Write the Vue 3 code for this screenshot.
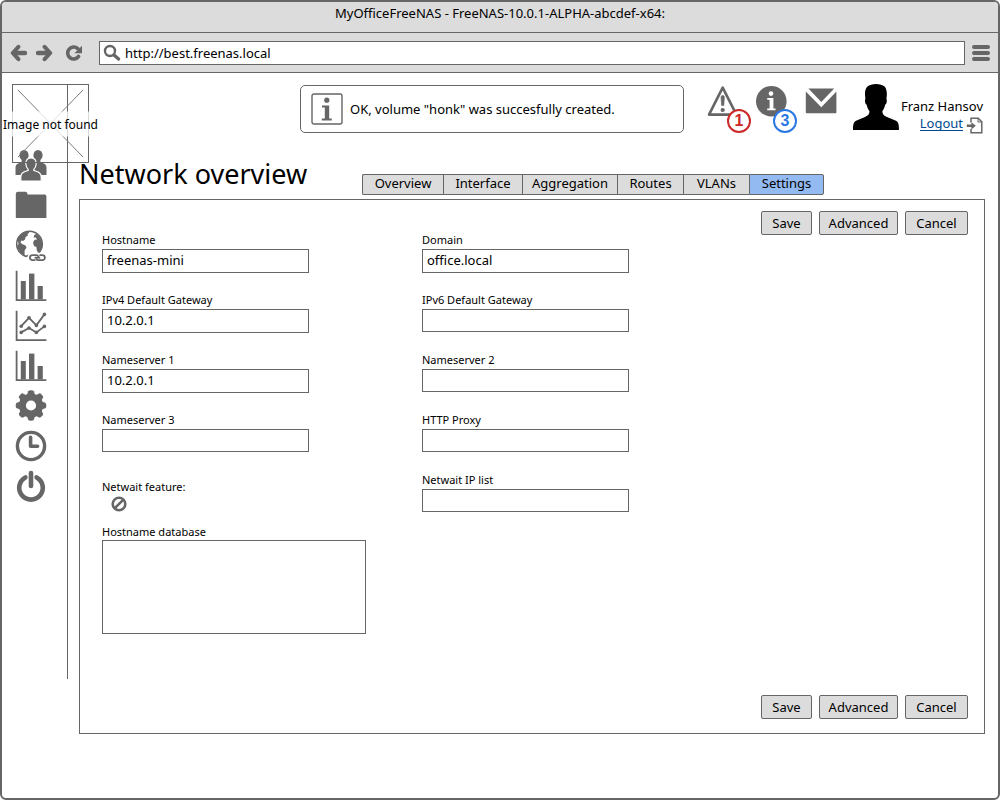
<script setup>
import { ref } from 'vue'

const url = ref('http://best.freenas.local')
const tabs = ['Overview', 'Interface', 'Aggregation', 'Routes', 'VLANs', 'Settings']
const activeTab = ref('Settings')
const actions = ['Save', 'Advanced', 'Cancel']
const database = ref('')

const leftFields = ref([
  { id: 'hostname', label: 'Hostname', value: 'freenas-mini' },
  { id: 'gw4', label: 'IPv4 Default Gateway', value: '10.2.0.1' },
  { id: 'ns1', label: 'Nameserver 1', value: '10.2.0.1' },
  { id: 'ns3', label: 'Nameserver 3', value: '' },
])
const rightFields = ref([
  { id: 'domain', label: 'Domain', value: 'office.local' },
  { id: 'gw6', label: 'IPv6 Default Gateway', value: '' },
  { id: 'ns2', label: 'Nameserver 2', value: '' },
  { id: 'proxy', label: 'HTTP Proxy', value: '' },
  { id: 'iplist', label: 'Netwait IP list', value: '' },
])
const sections = ['users', 'storage', 'network', 'reports', 'trends', 'statistics', 'settings', 'schedule', 'power']
</script>

<template>
  <div class="window">
    <div class="titlebar">MyOfficeFreeNAS - FreeNAS-10.0.1-ALPHA-abcdef-x64:</div>

    <div class="toolbar">
      <button class="tool" aria-label="Back">
        <svg width="18" height="18" viewBox="0 0 18 18">
          <path d="M8.4 2.8 L2.8 9 L8.4 15.2" fill="none" stroke="#666" stroke-width="4" stroke-linecap="round" stroke-linejoin="round" />
          <path d="M4 9 H15" stroke="#666" stroke-width="4.4" stroke-linecap="round" />
        </svg>
      </button>
      <button class="tool" aria-label="Forward">
        <svg width="18" height="18" viewBox="0 0 18 18">
          <path d="M9.6 2.8 L15.2 9 L9.6 15.2" fill="none" stroke="#666" stroke-width="4" stroke-linecap="round" stroke-linejoin="round" />
          <path d="M3 9 H14" stroke="#666" stroke-width="4.4" stroke-linecap="round" />
        </svg>
      </button>
      <button class="tool reload" aria-label="Reload">
        <svg width="18" height="18" viewBox="0 0 18 18">
          <path d="M13.6 12.4 A6 6 0 1 1 12.8 4.6" fill="none" stroke="#666" stroke-width="3.6" stroke-linecap="round" />
          <path d="M17 1.8 V9.2 H9.4 Z" fill="#666" />
        </svg>
      </button>
      <div class="address">
        <svg width="18" height="18" viewBox="0 0 18 18">
          <circle cx="7" cy="7" r="5" fill="none" stroke="#666" stroke-width="2.4" />
          <path d="M11 11 L15.6 15" stroke="#666" stroke-width="3.4" stroke-linecap="round" />
        </svg>
        <input v-model="url" type="text" aria-label="Address" />
      </div>
      <button class="tool" aria-label="Menu">
        <svg width="18" height="18" viewBox="0 0 18 18">
          <path d="M2 3 H16 M2 9 H16 M2 15 H16" stroke="#666" stroke-width="4" stroke-linecap="round" />
        </svg>
      </button>
    </div>

    <div class="content">
      <nav class="sidebar">
        <button v-for="name in sections" :key="name" class="nav" :aria-label="name">
          <svg width="32" height="32" viewBox="0 0 32 32" fill="#666">
            <g v-if="name === 'users'">
              <ellipse cx="9" cy="5.2" rx="4.6" ry="5.2" />
              <ellipse cx="23" cy="5.2" rx="4.6" ry="5.2" />
              <path d="M6.6 8 H11.4 V12 L17 14 V25 H0.5 V18 C0.5 14 3 13.6 6.6 12 Z" />
              <path d="M20.6 8 H25.4 V12 C29 13.6 31.5 14 31.5 18 V25 H15 V14 L20.6 12 Z" />
              <path d="M16 8 C12.3 8 10.6 10.6 10.8 14 C11 16.5 12 18 13.2 19.4 V20.4 C9 22 5.8 22.4 5.8 27 V31 H26.2 V27 C26.2 22.4 23 22 18.8 20.4 V19.4 C20 18 21 16.5 21.2 14 C21.4 10.6 19.7 8 16 8 Z" stroke="#fff" stroke-width="1.2" />
            </g>
            <path v-else-if="name === 'storage'" d="M0.8 4 Q0.8 1.8 3 1.8 H10.5 Q12.6 1.8 12.6 4.4 H29.8 Q31.4 4.4 31.4 6.2 V28 H0.8 Z" />
            <g v-else-if="name === 'network'">
              <circle cx="14.5" cy="14" r="12.8" fill="#fff" stroke="#666" stroke-width="1.6" />
              <path d="M2.5 10 C4 5 8 2.2 13 1.4 L14.4 2.6 L12.4 4.2 L13 5.4 L10.6 7 L10 9.4 L8 11 L6.4 10.6 L5.4 12.6 L7.4 14.2 L10.2 15.2 L11.6 17.4 L9.6 20.6 L9.6 25.4 C6 23.6 3 20 2.2 16 L3.6 14 Z" />
              <path d="M19.4 4.8 L21.4 4 C24.4 6.2 27 10 27.2 14 C27 18 25.6 20.8 23.4 22.8 L21.8 20.6 L21.4 17 L19 16 L18 12.6 L19.6 9.8 L22 9.4 L20.8 7.6 L18.6 7.6 Z" />
              <path d="M11 25.2 L15 24 L17 26.6 L12.4 27 Z" />
              <g fill="none" stroke="#fff" stroke-width="5">
                <rect x="14.7" y="25.2" width="9.4" height="5" rx="2.5" />
                <rect x="20.5" y="25.2" width="9.4" height="5" rx="2.5" />
              </g>
              <g fill="none" stroke="#666" stroke-width="1.8">
                <path d="M20.4 30.2 H17.4 A2.5 2.5 0 0 1 17.4 25.2 H21.4 A2.5 2.5 0 0 1 23.6 27" />
                <path d="M24.4 25.2 H27.4 A2.5 2.5 0 0 1 27.4 30.2 H23.2 A2.5 2.5 0 0 1 21 28.4" />
                <path d="M19.6 27.7 H25.2" />
              </g>
            </g>
            <g v-else-if="name === 'reports' || name === 'statistics'">
              <path d="M1.6 0.8 V30.2 H31.4" fill="none" stroke="#666" stroke-width="1.8" />
              <rect x="5.8" y="11" width="5" height="18.4" />
              <rect x="14" y="3.6" width="5.4" height="25.8" />
              <rect x="22.6" y="16" width="5.2" height="13.4" />
            </g>
            <g v-else-if="name === 'trends'">
              <path d="M1.6 0.8 V30.2 H31.4" fill="none" stroke="#666" stroke-width="1.8" />
              <path d="M6.2 16.2 L14 7.8 L21.4 15.4 L29.4 4.4 M6.2 22.4 L14 18 L21.4 22.4 L29.4 16.4" fill="none" stroke="#666" stroke-width="1.8" />
              <circle cx="6.2" cy="16.2" r="1.8" /><circle cx="14" cy="7.8" r="1.8" />
              <circle cx="21.4" cy="15.4" r="1.8" /><circle cx="29.4" cy="4.4" r="1.8" />
              <circle cx="6.2" cy="22.4" r="1.8" /><circle cx="14" cy="18" r="1.8" />
              <circle cx="21.4" cy="22.4" r="1.8" /><circle cx="29.4" cy="16.4" r="1.8" />
            </g>
            <g v-else-if="name === 'settings'">
              <circle cx="16" cy="15.5" r="8.6" fill="none" stroke="#666" stroke-width="7" />
              <path
                v-for="n in 8"
                :key="n"
                d="M12 5 L13.2 1.2 Q13.6 0.2 16 0.2 Q18.4 0.2 18.8 1.2 L20 5 Z"
                :transform="`rotate(${n * 45} 16 15.5)`"
              />
            </g>
            <g v-else-if="name === 'schedule'" fill="none" stroke="#666">
              <circle cx="16" cy="16" r="13.6" stroke-width="3.4" />
              <path d="M15.6 7.4 V16.2 H22.6" stroke-width="3.6" stroke-linecap="round" stroke-linejoin="round" />
            </g>
            <g v-else fill="none" stroke="#666" stroke-width="4.6" stroke-linecap="round">
              <path d="M10.4 7.4 A11.8 11.8 0 1 0 21.6 7.4" />
              <path d="M16 3 V16" />
            </g>
          </svg>
        </button>
      </nav>

      <div class="logo" role="img" aria-label="Image not found">
        <svg viewBox="0 0 77 79" preserveAspectRatio="none">
          <path d="M5 5 L72 74 M72 5 L5 74" stroke="#777" stroke-width="1" />
        </svg>
        <span>Image not found</span>
      </div>

      <main class="main">
        <header class="header">
          <div class="notice" role="status">
            <svg width="32" height="32" viewBox="0 0 32 32" fill="#666">
              <rect x="1" y="1" width="30" height="30" rx="2" fill="none" stroke="#666" stroke-width="1.4" />
              <circle cx="15.8" cy="7.2" r="2.6" />
              <path d="M11 12.4 H18.2 V25.4 H20.8 V27.4 H10.8 V25.4 H13.8 V14.4 H11 Z" />
            </svg>
            <span>OK, volume "honk" was succesfully created.</span>
          </div>

          <div class="status">
            <button class="alert" aria-label="Warnings">
              <svg width="32" height="32" viewBox="0 0 32 32">
                <path d="M15.7 2.6 L29.4 29.6 H2 Z" fill="none" stroke="#666" stroke-width="2.6" stroke-linejoin="round" />
                <path d="M14 12 Q14 10.4 15.7 10.4 Q17.4 10.4 17.4 12 L16.8 20.6 H14.6 Z" fill="#666" stroke="#666" stroke-width="0.6" />
                <circle cx="15.7" cy="25" r="2.1" fill="#666" />
              </svg>
              <span class="badge red">1</span>
            </button>
            <button class="alert" aria-label="Information">
              <svg width="32" height="32" viewBox="0 0 32 32">
                <circle cx="15.3" cy="16.2" r="15.3" fill="#666" />
                <circle cx="15" cy="8.6" r="2.3" fill="#fff" />
                <path d="M11.2 13 H17.4 V23.4 H19.6 V25.2 H11.2 V23.4 H13.6 V14.8 H11.2 Z" fill="#fff" />
              </svg>
              <span class="badge blue">3</span>
            </button>
            <button class="alert" aria-label="Messages">
              <svg width="32" height="32" viewBox="0 0 32 32" fill="#666">
                <path d="M3.4 3.4 H29.2 L16.3 17 Z" />
                <path d="M0.8 6.4 L16.3 22.2 L31.4 6.4 V27.6 Q31.4 28.2 30.6 28.2 H1.6 Q0.8 28.2 0.8 27.6 Z" />
              </svg>
            </button>
          </div>

          <svg class="avatar" width="46" height="46" viewBox="0 0 46 46">
            <path d="M0 46 C0 40 0.6 37.6 3.6 36.4 L12 33 C15.4 31.6 16.6 30 16.4 27 C14.8 25 14 23 13.6 20.6 C12 20 11.6 16 12.4 14.6 C11.6 9 11.8 5.6 14.4 2.6 C18 -0.8 28 -0.8 31.6 2.6 C34.2 5.6 34.2 10.6 33.4 14.6 C34.2 16 33.8 20 32.2 20.6 C31.8 23 31 25 29.4 27 C29.2 30 30.6 31.6 34 33 L42.4 36.4 C45.4 37.6 46 40 46 46 Z" fill="#000" />
          </svg>

          <div class="account">
            <span>Franz Hansov</span>
            <div class="logout">
              <a href="#">Logout</a>
              <svg width="17" height="17" viewBox="0 0 17 17">
                <path d="M5 5.4 V1.2 H12.2 L15.8 4.8 V15.8 H5 V12" fill="none" stroke="#666" stroke-width="1.5" />
                <path d="M12 1 V5 H16" fill="none" stroke="#666" stroke-width="1" />
                <path d="M0.8 7.6 H5.4 V5.2 L9.8 8.8 L5.4 12.4 V10 H0.8 Z" fill="#666" />
              </svg>
            </div>
          </div>
        </header>

        <div class="heading">
          <h1>Network overview</h1>
          <div class="tabs" role="tablist">
            <button
              v-for="tab in tabs"
              :key="tab"
              role="tab"
              :aria-selected="tab === activeTab"
              :class="{ active: tab === activeTab }"
              @click="activeTab = tab"
            >{{ tab }}</button>
          </div>
        </div>

        <form class="panel" @submit.prevent>
          <div class="actions">
            <button v-for="a in actions" :key="a" type="button">{{ a }}</button>
          </div>

          <div class="columns">
            <div class="column">
              <div v-for="f in leftFields" :key="f.id" class="field">
                <label :for="f.id">{{ f.label }}</label>
                <input :id="f.id" v-model="f.value" type="text" :class="{ empty: !f.value }" />
              </div>
              <div class="netwait">
                <span class="label">Netwait feature:</span>
                <svg width="16" height="16" viewBox="0 0 16 16" role="img" aria-label="Disabled">
                  <circle cx="8" cy="8" r="6.3" fill="none" stroke="#666" stroke-width="2.6" />
                  <path d="M3.8 12.2 L12.2 3.8" stroke="#666" stroke-width="2.6" />
                </svg>
              </div>
              <div class="database">
                <label for="database">Hostname database</label>
                <textarea id="database" v-model="database"></textarea>
              </div>
            </div>
            <div class="column">
              <div v-for="f in rightFields" :key="f.id" class="field">
                <label :for="f.id">{{ f.label }}</label>
                <input :id="f.id" v-model="f.value" type="text" :class="{ empty: !f.value }" />
              </div>
            </div>
          </div>

          <div class="actions">
            <button v-for="a in actions" :key="a" type="button">{{ a }}</button>
          </div>
        </form>
      </main>
    </div>
  </div>
</template>

<style>
body {
  background: #fff;
}
</style>

<style scoped>
* {
  box-sizing: border-box;
}
.window {
  display: flex;
  flex-direction: column;
  min-height: 100vh;
  border: 2px solid #666;
  border-radius: 6px;
  overflow: hidden;
  background: #fff;
  color: #000;
  font: 13px/16px "Noto Sans", "Open Sans", sans-serif;
}
button,
input,
textarea {
  font: inherit;
  color: inherit;
  margin: 0;
}
svg {
  display: block;
  flex: none;
}
.titlebar {
  height: 31px;
  padding-top: 3px;
  text-align: center;
  background: #dcdcdc;
  border-bottom: 1px solid #666;
}
.toolbar {
  display: flex;
  align-items: center;
  gap: 7px;
  height: 40px;
  padding: 0 8px;
  background: #dcdcdc;
  border-bottom: 1px solid #666;
}
.tool {
  padding: 0;
  border: 0;
  background: none;
}
.reload {
  margin-left: 5px;
}
.address {
  display: flex;
  align-items: center;
  flex: 1;
  gap: 4px;
  height: 24px;
  margin-left: 9px;
  padding-left: 3px;
  background: #fff;
  border: 1px solid #666;
}
.address input {
  flex: 1;
  min-width: 0;
  height: 20px;
  padding: 0;
  border: 0;
  outline: 0;
  background: none;
}
.content {
  position: relative;
  display: flex;
  padding: 11px 13px 24px 0;
}
.sidebar {
  display: flex;
  flex-direction: column;
  flex: none;
  gap: 8px;
  width: 66px;
  margin-bottom: 55px;
  padding: 66px 0 0 13px;
  border-right: 1px solid #666;
}
.nav {
  align-self: flex-start;
  padding: 0;
  border: 0;
  background: none;
}
.nav svg {
  overflow: visible;
}
.logo {
  position: absolute;
  top: 11px;
  left: 10px;
  width: 77px;
  height: 79px;
  border: 1px solid #666;
}
.logo svg {
  width: 100%;
  height: 100%;
}
.logo span {
  position: absolute;
  top: 50%;
  left: 50%;
  padding: 5px 3px;
  transform: translate(-50%, -50%);
  background: rgba(255, 255, 255, 0.75);
  font-size: 12px;
  line-height: 15px;
  white-space: nowrap;
}
.main {
  flex: 1;
  min-width: 0;
  margin-left: 11px;
}
.header {
  display: flex;
  align-items: flex-start;
  height: 49px;
  padding-left: 221px;
}
.notice {
  display: flex;
  align-items: center;
  flex: 1;
  gap: 7px;
  height: 48px;
  margin-top: 1px;
  padding-left: 10px;
  border: 1px solid #666;
  border-radius: 5px;
}
.status {
  display: flex;
  gap: 17px;
  margin-left: 23px;
  padding-top: 1px;
}
.alert {
  position: relative;
  padding: 0;
  border: 0;
  background: none;
}
.badge {
  position: absolute;
  top: 24px;
  left: 20px;
  width: 24px;
  height: 24px;
  border: 2px solid;
  border-radius: 50%;
  background: #fff;
  font: bold 16px/20px "Liberation Sans", sans-serif;
  text-align: center;
}
.red {
  color: #cc2929;
}
.blue {
  left: 17px;
  color: #2b78e4;
}
.avatar {
  margin-left: 16px;
}
.account {
  display: flex;
  flex-direction: column;
  align-items: flex-end;
  gap: 1px;
  width: 84px;
  margin-right: 2px;
  padding-top: 14px;
  white-space: nowrap;
}
.logout {
  display: flex;
  gap: 3px;
}
.logout svg {
  margin-top: 2px;
}
.logout a {
  height: 16px;
  color: #004a8f;
  text-decoration: none;
  border-bottom: 1px solid #004a8f;
}
.heading {
  display: flex;
  align-items: flex-end;
  height: 66px;
  padding-bottom: 4px;
}
h1 {
  flex: none;
  width: 283px;
  margin: 0;
  padding-bottom: 4px;
  font-size: 27px;
  font-weight: 400;
  line-height: 34px;
}
.tabs {
  display: grid;
  grid-template-columns: 81px 79px 95px 66px 66px 75px;
  height: 21px;
  background: #dcdcdc;
  border-radius: 2px;
}
.tabs button {
  padding: 0 0 3px;
  border: 1px solid #666;
  border-right-width: 0;
  background: none;
  line-height: 16px;
}
.tabs button:first-child {
  border-radius: 2px 0 0 2px;
}
.tabs button:last-child {
  border-right-width: 1px;
  border-radius: 0 2px 2px 0;
}
.tabs .active {
  background: #94baf2;
}
.panel {
  padding: 11px 16px 14px 22px;
  border: 1px solid #666;
}
.actions {
  display: grid;
  grid-template-columns: 51px 79px 63px;
  justify-content: end;
  gap: 7px;
}
.actions button {
  height: 24px;
  padding: 0 0 1px;
  background: #dcdcdc;
  border: 1px solid #666;
  border-radius: 2px;
}
.columns {
  display: flex;
  gap: 56px;
  margin-top: -1px;
  padding-bottom: 61px;
}
.column {
  width: 264px;
}
.field {
  height: 60px;
}
label,
.label {
  display: block;
  margin-bottom: 3px;
  font-size: 11px;
  line-height: 12px;
}
.field input {
  display: block;
  width: 207px;
  height: 24px;
  padding: 0 4px 2px;
  background: #fff;
  border: 1px solid #666;
}
.field .empty {
  height: 23px;
}
.netwait {
  height: 52px;
  padding-top: 7px;
}
.netwait svg {
  margin-left: 9px;
}
.database label {
  margin-bottom: 2px;
}
textarea {
  display: block;
  width: 100%;
  height: 94px;
  padding: 4px;
  border: 1px solid #666;
  background: #fff;
  resize: none;
}
</style>
